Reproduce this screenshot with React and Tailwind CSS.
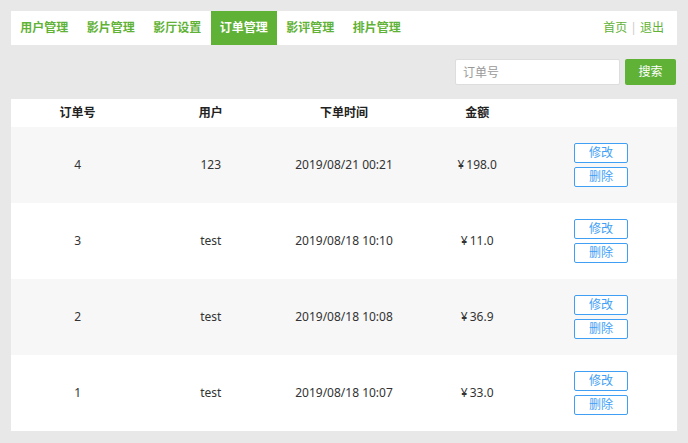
const tabs = ['用户管理', '影片管理', '影厅设置', '订单管理', '影评管理', '排片管理'];

const orders = [
  { id: 4, user: '123', time: '2019/08/21 00:21', amount: '198.0' },
  { id: 3, user: 'test', time: '2019/08/18 10:10', amount: '11.0' },
  { id: 2, user: 'test', time: '2019/08/18 10:08', amount: '36.9' },
  { id: 1, user: 'test', time: '2019/08/18 10:07', amount: '33.0' },
];

const font = { fontFamily: '"Noto Sans", "Noto Sans CJK SC", sans-serif' };

export default function App() {
  return (
    <div
      className="w-[688px] h-[443px] bg-[#e8e8e8] px-[11px] pt-[11px] text-[12px] text-[#333]"
      style={font}
    >
      {/* nav */}
      <div className="flex items-center h-[34px] bg-white">
        {tabs.map((t, i) => (
          <div
            key={t}
            className={`w-[66.5px] h-full flex items-center justify-center font-bold ${
              i === 3 ? 'bg-[#5fb236] text-white' : 'text-[#5fb236]'
            }`}
          >
            {t}
          </div>
        ))}
        <div className="ml-auto pr-[13px] flex items-center text-[#5fb236]">
          <span>首页</span>
          <span className="mx-[3px] text-[#ccc]">|</span>
          <span>退出</span>
        </div>
      </div>

      {/* search */}
      <div className="flex justify-end items-center mt-[14px] gap-[5px] pr-px">
        <input
          placeholder="订单号"
          className="w-[165px] h-[26px] bg-white border border-[#ddd] rounded-[2px] px-[7px] text-[12px] placeholder:text-[#999] outline-none"
        />
        <button className="w-[51px] h-[26px] bg-[#5fb236] text-white rounded-[2px]">搜索</button>
      </div>

      {/* table */}
      <div className="mt-[14px] bg-white">
        <div className="grid grid-cols-5 h-[28px] items-center font-bold text-[#222]">
          <div className="text-center">订单号</div>
          <div className="text-center">用户</div>
          <div className="text-center">下单时间</div>
          <div className="text-center">金额</div>
          <div />
        </div>
        {orders.map((o, i) => (
          <div
            key={o.id}
            className={`grid grid-cols-5 h-[76px] items-center ${i % 2 === 0 ? 'bg-[#f7f7f7]' : 'bg-white'}`}
          >
            <div className="text-center">{o.id}</div>
            <div className="text-center">{o.user}</div>
            <div className="text-center">{o.time}</div>
            <div className="text-center">
              <span className="mr-[2px]">¥</span>
              {o.amount}
            </div>
            <div className="flex flex-col items-center gap-[4px] pr-[19px]">
              <button className="w-[54px] h-[20px] border border-[#3f9ff5] rounded-[2px] bg-white text-[#3f9ff5] leading-none">
                修改
              </button>
              <button className="w-[54px] h-[20px] border border-[#3f9ff5] rounded-[2px] bg-white text-[#3f9ff5] leading-none">
                删除
              </button>
            </div>
          </div>
        ))}
      </div>
    </div>
  );
}
